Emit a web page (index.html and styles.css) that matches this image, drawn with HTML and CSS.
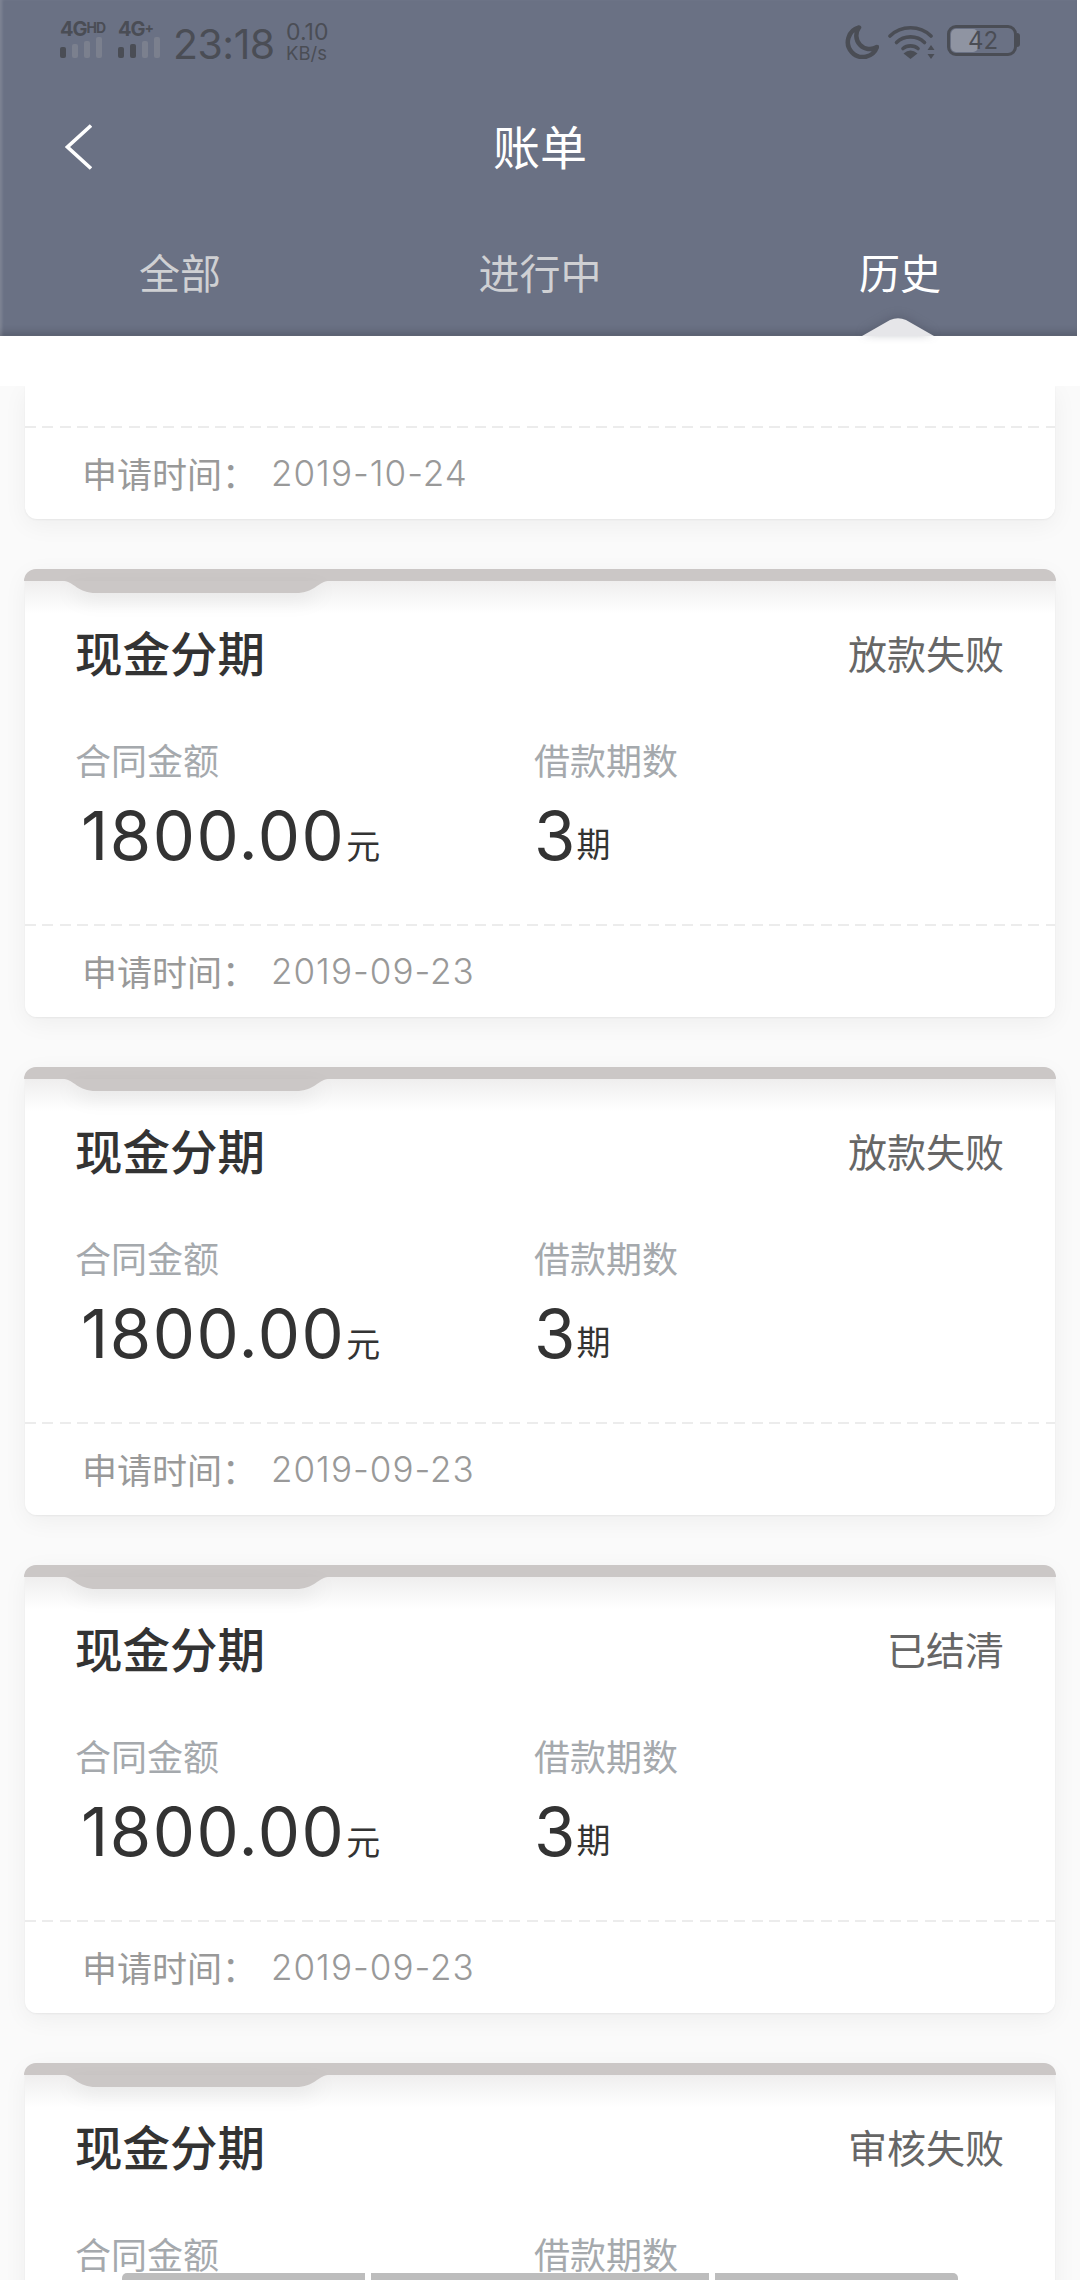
FILE: index.html
```html
<!DOCTYPE html>
<html lang="zh-CN">
<head>
  <meta charset="UTF-8" />
  <meta name="viewport" content="width=device-width, initial-scale=1.0" />
  <title>账单</title>
  <link rel="stylesheet" href="styles.css">
</head>
<body>
  <div class="page">
    <header class="top">
      <div class="statusbar">
        <div class="signal">
          <div class="net">4G<sup>HD</sup></div>
          <svg class="bars" width="44" height="22" viewBox="0 0 44 22">
            <rect x="0" y="10" width="6" height="11" rx="2" fill="#4a4d55"/>
            <rect x="12" y="7" width="6" height="14" rx="2" fill="#7b808e"/>
            <rect x="24" y="4" width="6" height="17" rx="2" fill="#7b808e"/>
            <rect x="36" y="0" width="6" height="21" rx="2" fill="#7b808e"/>
          </svg>
        </div>
        <div class="signal signal-second">
          <div class="net">4G<sup>+</sup></div>
          <svg class="bars" width="44" height="22" viewBox="0 0 44 22">
            <rect x="0" y="10" width="6" height="11" rx="2" fill="#4a4d55"/>
            <rect x="12" y="7" width="6" height="14" rx="2" fill="#4a4d55"/>
            <rect x="24" y="4" width="6" height="17" rx="2" fill="#7b808e"/>
            <rect x="36" y="0" width="6" height="21" rx="2" fill="#7b808e"/>
          </svg>
        </div>
        <span class="clock">23:18</span>
        <div class="speed"><span>0.10</span><span class="speed-unit">KB/s</span></div>
        <div class="status-right">
          <svg width="34" height="34" viewBox="0 0 34 34">
            <path d="M14 2.500A15 15 0 1 0 32 22 A13.500 13.500 0 0 1 14 2.500Z" fill="none" stroke="#4a4d55" stroke-width="4.500" stroke-linejoin="round"/>
          </svg>
          <svg class="wifi" width="47" height="35" viewBox="0 0 47 35">
            <path d="M2 11C13 0 32 0 43 11" fill="none" stroke="#4a4d55" stroke-width="3.600" stroke-linecap="round"/>
            <path d="M8.500 17.500C16 10 29 10 36.500 17.500" fill="none" stroke="#4a4d55" stroke-width="3.600" stroke-linecap="round"/>
            <path d="M15 23.500C19 20 26 20 30 23.500" fill="none" stroke="#4a4d55" stroke-width="3.600" stroke-linecap="round"/>
            <path d="M15.500 28.500Q22.500 22.500 29.500 28.500L22.500 34Z" fill="#4a4d55"/>
            <path d="M43 20l3.500 5h-7zM43 34l3.500-5h-7z" fill="#4a4d55"/>
          </svg>
          <div class="battery">
            <div class="battery-level"></div>
            <span class="battery-num">42</span>
          </div>
          <div class="battery-tip"></div>
        </div>
      </div>

      <div class="navbar">
        <svg class="back" width="27" height="46" viewBox="0 0 27 46">
          <path d="M26 1.500L2.500 23L26 44.500" fill="none" stroke="#fff" stroke-width="3.600"/>
        </svg>
        <h1>账单</h1>
      </div>

      <nav class="tabs">
        <a class="tab">全部</a>
        <a class="tab">进行中</a>
        <a class="tab active">历史</a>
      </nav>
      <svg class="tab-pointer" width="72" height="18" viewBox="0 0 72 18">
        <path d="M0 18L28 2Q36 -1.500 44 2L72 18Z" fill="#e6e6e9"/>
      </svg>
    </header>

    <div class="gap"></div>

    <main class="list">
      <section class="card card-cut">
        <div class="card-foot">
          <span class="foot-label">申请时间：</span><span class="foot-date">2019-10-24</span>
        </div>
      </section>

      <section class="card">
        <div class="card-bar"></div>
        <svg class="card-notch" width="264" height="13" viewBox="0 0 264 13">
          <path d="M0 0H264C254 1 250 12 232 12H32C14 12 10 1 0 0Z" fill="#cbc7c6"/>
        </svg>
        <div class="card-head">
          <h2>现金分期</h2>
          <span class="state">放款失败</span>
        </div>
        <div class="card-info">
          <div>
            <div class="info-label">合同金额</div>
            <div class="info-value value-money">1800.00<small>元</small></div>
          </div>
          <div>
            <div class="info-label">借款期数</div>
            <div class="info-value">3<small>期</small></div>
          </div>
        </div>
        <div class="card-foot">
          <span class="foot-label">申请时间：</span><span class="foot-date">2019-09-23</span>
        </div>
      </section>

      <section class="card">
        <div class="card-bar"></div>
        <svg class="card-notch" width="264" height="13" viewBox="0 0 264 13">
          <path d="M0 0H264C254 1 250 12 232 12H32C14 12 10 1 0 0Z" fill="#cbc7c6"/>
        </svg>
        <div class="card-head">
          <h2>现金分期</h2>
          <span class="state">放款失败</span>
        </div>
        <div class="card-info">
          <div>
            <div class="info-label">合同金额</div>
            <div class="info-value value-money">1800.00<small>元</small></div>
          </div>
          <div>
            <div class="info-label">借款期数</div>
            <div class="info-value">3<small>期</small></div>
          </div>
        </div>
        <div class="card-foot">
          <span class="foot-label">申请时间：</span><span class="foot-date">2019-09-23</span>
        </div>
      </section>

      <section class="card">
        <div class="card-bar"></div>
        <svg class="card-notch" width="264" height="13" viewBox="0 0 264 13">
          <path d="M0 0H264C254 1 250 12 232 12H32C14 12 10 1 0 0Z" fill="#cbc7c6"/>
        </svg>
        <div class="card-head">
          <h2>现金分期</h2>
          <span class="state">已结清</span>
        </div>
        <div class="card-info">
          <div>
            <div class="info-label">合同金额</div>
            <div class="info-value value-money">1800.00<small>元</small></div>
          </div>
          <div>
            <div class="info-label">借款期数</div>
            <div class="info-value">3<small>期</small></div>
          </div>
        </div>
        <div class="card-foot">
          <span class="foot-label">申请时间：</span><span class="foot-date">2019-09-23</span>
        </div>
      </section>

      <section class="card">
        <div class="card-bar"></div>
        <svg class="card-notch" width="264" height="13" viewBox="0 0 264 13">
          <path d="M0 0H264C254 1 250 12 232 12H32C14 12 10 1 0 0Z" fill="#cbc7c6"/>
        </svg>
        <div class="card-head">
          <h2>现金分期</h2>
          <span class="state">审核失败</span>
        </div>
        <div class="card-info">
          <div>
            <div class="info-label">合同金额</div>
          </div>
          <div>
            <div class="info-label">借款期数</div>
          </div>
        </div>
      </section>
    </main>

    <div class="softkeys">
      <span></span><span></span><span></span>
    </div>
  </div>
</body>
</html>
```

FILE: styles.css
```css
* {
  box-sizing: border-box;
}
body {
  margin: 0;
  font-family: Inter, 'Noto Sans CJK SC', sans-serif;
  background-color: #fff;
  color: #333;
}
.page {
  width: 1080px;
  height: 2280px;
  overflow: hidden;
  position: relative;
  display: flex;
  flex-direction: column;
}

/* header */
.top {
  height: 336px;
  flex: none;
  position: relative;
  background-color: #6a7184;
  margin-right: 3px;
  box-shadow: inset 3px 0 3px -1px rgba(255,255,255,0.15), inset 0 -9px 8px -6px rgba(0,0,0,0.2);
}
.statusbar {
  height: 88px;
  padding: 22px 0 0 60px;
  display: flex;
  align-items: flex-start;
  color: #4a4d55;
}
.signal {
  width: 58px;
}
.signal-second {
  width: 55px;
}
.net {
  font-size: 20px;
  line-height: 15px;
  height: 15px;
  font-weight: 700;
  letter-spacing: -1px;
  white-space: nowrap;
}
.net sup {
  font-size: 14px;
  line-height: 0;
  vertical-align: 3px;
}
.bars {
  display: block;
}
.clock {
  font-size: 41px;
  line-height: 44px;
  width: 113px;
  letter-spacing: -0.5px;
}
.speed {
  display: flex;
  flex-direction: column;
  font-size: 23px;
  line-height: 21px;
}
.speed-unit {
  font-size: 18.500px;
}
.status-right {
  margin-left: auto;
  margin-right: 57px;
  padding-top: 3px;
  display: flex;
  align-items: flex-start;
}
.wifi {
  margin-left: 9px;
}
.battery {
  width: 70px;
  height: 31px;
  margin-left: 12px;
  border: 3px solid #4a4d55;
  border-radius: 9px;
  position: relative;
  font-size: 24px;
  line-height: 25px;
  text-align: center;
}
.battery-level {
  position: absolute;
  left: 1px;
  top: 1px;
  bottom: 1px;
  width: 27px;
  background-color: #8f94a2;
  border-radius: 5px;
}
.battery-num {
  position: relative;
  margin-left: 2px;
}
.battery-tip {
  width: 3px;
  height: 14px;
  margin-top: 8px;
  background-color: #4a4d55;
  border-radius: 0 3px 3px 0;
}
.navbar {
  height: 118px;
  padding-left: 65px;
  display: flex;
  align-items: center;
  position: relative;
}
.back {
  display: block;
}
.navbar h1 {
  position: absolute;
  left: 0;
  right: 0;
  margin: 2px -3px 0 0;
  text-align: center;
  font-size: 47px;
  font-weight: 400;
  line-height: 60px;
  color: #fff;
}
.tabs {
  display: grid;
  grid-template-columns: 360px 360px 360px;
  padding-top: 40px;
}
.tab {
  text-align: center;
  font-size: 41px;
  line-height: 56px;
  color: #cfd0d3;
}
.tab.active {
  color: #fff;
}
.tab-pointer {
  position: absolute;
  left: 862px;
  bottom: 0;
  display: block;
  filter: drop-shadow(0 -2px 5px rgba(70,75,90,0.4));
}

.gap {
  height: 50px;
  flex: none;
}

/* bill cards */
.list {
  flex: 1;
  min-height: 0;
  overflow: hidden;
  background-color: #fafafa;
  padding: 0 25px;
}
.card {
  height: 448px;
  margin-bottom: 50px;
  position: relative;
  background: linear-gradient(#efeeee 12px, #fff 44px);
  border-radius: 12px;
  box-shadow: 0 6px 24px rgba(0,0,0,0.05), 0 1px 2px rgba(0,0,0,0.05);
}
.card-cut {
  height: 133px;
  padding-top: 40px;
  background: #fff;
  border-radius: 0 0 12px 12px;
}
.card-bar {
  height: 12px;
  margin: 0 -1px;
  background-color: #cbc7c6;
  border-radius: 12px 12px 0 0;
}
.card-notch {
  position: absolute;
  left: 39px;
  top: 12px;
  filter: drop-shadow(0 8px 9px rgba(0,0,0,0.07));
}
.card-head {
  height: 60px;
  margin-top: 44px;
  padding: 0 51px 0 50px;
  display: flex;
  align-items: center;
  justify-content: space-between;
}
.card-head h2 {
  margin: 0;
  font-size: 47.500px;
  font-weight: 500;
  line-height: 60px;
}
.state {
  font-size: 39px;
  line-height: 60px;
  color: #666;
}
.card-info {
  display: grid;
  grid-template-columns: 459px 1fr;
  margin-top: 57px;
  padding-left: 50px;
}
.info-label {
  height: 40px;
  font-size: 36px;
  line-height: 40px;
  color: #a5a9ad;
}
.info-value {
  height: 80px;
  margin-top: 14px;
  font-size: 67px;
  line-height: 80px;
  white-space: nowrap;
}
.value-money {
  padding-left: 6px;
  letter-spacing: 1.500px;
}
.info-value small {
  font-size: 34px;
  margin-left: 1px;
  vertical-align: 3px;
}
.value-money small {
  vertical-align: 1px;
}
.card-foot {
  height: 93px;
  margin-top: 48px;
  padding-left: 57px;
  background: repeating-linear-gradient(90deg, #ececec 0 11px, transparent 11px 17.3px) top left / 100% 2px no-repeat;
  display: flex;
  align-items: center;
  font-size: 35px;
  color: #999;
}
.card-cut .card-foot {
  margin-top: 0;
}
.foot-label {
  width: 189px;
}
.foot-date {
  font-weight: 300;
  letter-spacing: 1px;
}

/* soft key strip peeking in at the very bottom */
.softkeys {
  position: absolute;
  left: 122px;
  bottom: 0;
  display: flex;
  gap: 6px;
}
.softkeys span {
  height: 7px;
  width: 243px;
  background-color: #bdbdbd;
}
.softkeys span:first-child {
  border-radius: 5px 0 0 0;
}
.softkeys span:nth-child(2) {
  width: 338px;
}
.softkeys span:last-child {
  border-radius: 0 5px 0 0;
}
```
